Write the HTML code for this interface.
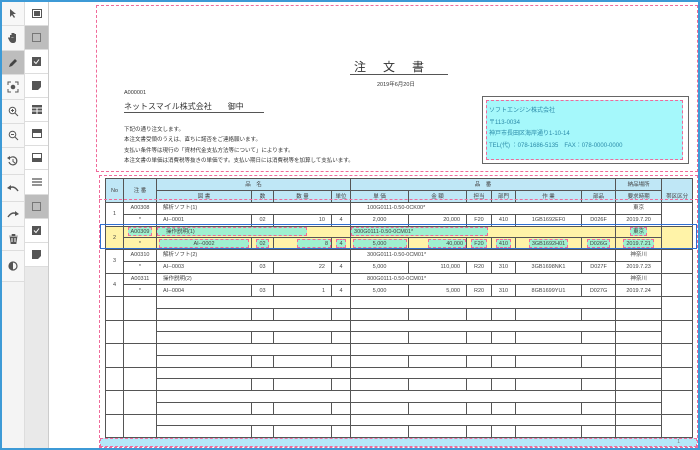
<!DOCTYPE html>
<html><head><meta charset="utf-8"><style>
*{margin:0;padding:0;box-sizing:border-box}
body{width:700px;height:450px;overflow:hidden;background:#fff;font-family:"Liberation Sans","Noto Sans CJK JP",sans-serif;position:relative;color:#333}
.frame{position:absolute;left:0;top:0;width:700px;height:450px;border:2px solid #3d9ad6;z-index:20;pointer-events:none}
.col1{position:absolute;left:2px;top:2px;width:23px;height:446px;background:#f4f4f4;border-right:1px solid #ddd}
.col2{position:absolute;left:25px;top:2px;width:24px;height:446px;background:#e9e9e9;border-right:1px solid #ccc}
.btn{position:absolute;left:0;width:100%;display:flex;align-items:center;justify-content:center;border-bottom:1px solid #ddd;background:#f7f7f7}
.col2 .btn{background:#fff}
.btn.sel{background:#bdbdbd}
.abs{position:absolute}
.pink{position:absolute;border:1px dashed #f06a9a}
.t{font-size:6px;white-space:nowrap}
table{position:absolute;left:105px;top:178px;border-collapse:collapse;table-layout:fixed;width:587px}
td{border:1px solid #555;font-size:5.5px;text-align:center;overflow:hidden;white-space:nowrap;padding:0;height:11.75px;line-height:10px;color:#444}
td.l{text-align:left;padding-left:6px}
td.r{text-align:right;padding-right:6px}
tr.h td{background:#bfe7f6;height:12px}
td.hl{background:#fff3a8}
.cy{display:inline-block;background:#9ff0cf;border:1px dashed #f06a9a;height:9px;line-height:8px;vertical-align:middle;padding:0 2px}
</style></head><body>
<div class="frame"></div>
<div class="col1">
 <div class="btn" style="top:0;height:24px"><svg width="8" height="9"><path d="M1 0L1 8L3 6L5 9L6 8L4 5L7 5Z" fill="#555"/></svg></div>
 <div class="btn" style="top:24px;height:25px"><svg width="11" height="12"><path d="M2 6V3h1.5v3M3.5 5V1h1.5v4M5 5V1h1.5v4M6.5 5V2H8v6c0 2-1 3-3 3S2 10 1 8L0 6l1-1 1 1" fill="#555"/></svg></div>
 <div class="btn sel" style="top:49px;height:24px"><svg width="10" height="10"><path d="M1 9L2 6L7 1L9 3L4 8Z" fill="#444"/></svg></div>
 <div class="btn" style="top:73px;height:25px"><svg width="12" height="12"><circle cx="6" cy="6" r="2.3" fill="#555"/><path d="M1 4V1h3M8 1h3v3M11 8v3H8M4 11H1V8" stroke="#555" fill="none"/></svg></div>
 <div class="btn" style="top:98px;height:24px"><svg width="11" height="11"><circle cx="4.5" cy="4.5" r="3.3" stroke="#555" fill="none"/><path d="M7 7L10 10M3 4.5h3M4.5 3v3" stroke="#555"/></svg></div>
 <div class="btn" style="top:122px;height:24px"><svg width="11" height="11"><circle cx="4.5" cy="4.5" r="3.3" stroke="#555" fill="none"/><path d="M7 7L10 10M3 4.5h3" stroke="#555"/></svg></div>
 <div class="btn" style="top:146px;height:27px"><svg width="12" height="12"><path d="M3 3A4 4 0 1 1 2 7" stroke="#555" fill="none" stroke-width="1.2"/><path d="M0 3L3 1L3 5Z" fill="#555"/><path d="M6 4V6.5L8 8" stroke="#555" fill="none"/></svg></div>
 <div class="btn" style="top:173px;height:27px"><svg width="12" height="9"><path d="M2 4Q7 1 11 7" stroke="#555" fill="none" stroke-width="1.5"/><path d="M0 4L4 1V6Z" fill="#555"/></svg></div>
 <div class="btn" style="top:200px;height:25px"><svg width="12" height="9"><path d="M10 4Q5 1 1 7" stroke="#555" fill="none" stroke-width="1.5"/><path d="M12 4L8 1V6Z" fill="#555"/></svg></div>
 <div class="btn" style="top:225px;height:24px"><svg width="9" height="10"><path d="M0 2h9M3 2V0h3v2M1 3h7l-1 7H2Z" fill="#555" stroke="#555" stroke-width=".6"/><path d="M3 4v4M6 4v4" stroke="#fff"/></svg></div>
 <div class="btn" style="top:249px;height:31px"><svg width="10" height="10"><circle cx="5" cy="5" r="4" stroke="#555" fill="none" stroke-width="1.2"/><path d="M5 1A4 4 0 0 0 5 9Z" fill="#555"/></svg></div>
</div>
<div class="col2">
 <div class="btn" style="top:0;height:24px"><svg width="10" height="9"><rect x="0.5" y="0.5" width="9" height="8" fill="none" stroke="#555"/><rect x="2" y="2" width="6" height="5" fill="#555"/></svg></div>
 <div class="btn sel" style="top:24px;height:24px"><svg width="9" height="9"><rect x="0.5" y="0.5" width="8" height="8" fill="none" stroke="#777"/></svg></div>
 <div class="btn" style="top:48px;height:24px"><svg width="9" height="9"><rect width="9" height="9" fill="#555"/><path d="M2 4.5L4 6.5L7 2.5" stroke="#fff" fill="none"/></svg></div>
 <div class="btn" style="top:72px;height:24px"><svg width="9" height="9"><path d="M0 0h9v6l-3 3H0Z" fill="#555"/></svg></div>
 <div class="btn" style="top:96px;height:24px"><svg width="10" height="9"><rect width="10" height="9" fill="#555"/><path d="M0 3h10M0 6h10M5 3v6" stroke="#fff"/></svg></div>
 <div class="btn" style="top:120px;height:24px"><svg width="10" height="9"><rect x="0.5" y="0.5" width="9" height="8" fill="#fff" stroke="#555"/><rect width="10" height="4" fill="#555"/></svg></div>
 <div class="btn" style="top:144px;height:24px"><svg width="10" height="9"><rect x="0.5" y="0.5" width="9" height="8" fill="#fff" stroke="#555"/><rect y="5" width="10" height="4" fill="#555"/></svg></div>
 <div class="btn" style="top:168px;height:25px"><svg width="10" height="8"><path d="M0 1h10M0 4h10M0 7h10" stroke="#555" stroke-width="1.2"/></svg></div>
 <div class="btn sel" style="top:193px;height:24px"><svg width="9" height="9"><rect x="0.5" y="0.5" width="8" height="8" fill="none" stroke="#777"/></svg></div>
 <div class="btn" style="top:217px;height:24px"><svg width="9" height="9"><rect width="9" height="9" fill="#555"/><path d="M2 4.5L4 6.5L7 2.5" stroke="#fff" fill="none"/></svg></div>
 <div class="btn" style="top:241px;height:24px"><svg width="9" height="9"><path d="M0 0h9v6l-3 3H0Z" fill="#555"/></svg></div>
</div>

<div class="pink" style="left:96px;top:5px;width:602px;height:167px"></div>
<div class="abs" style="left:350px;top:61px;width:98px;font-size:12px;letter-spacing:17px;color:#333;border-bottom:1px solid #555;line-height:13px;padding-left:4px">注文書</div>
<div class="abs t" style="left:377px;top:80px;font-size:5.5px">2019年6月20日</div>
<div class="abs t" style="left:124px;top:90px;font-size:5.5px">A000001</div>
<div class="abs" style="left:124px;top:101px;width:140px;font-size:8px;border-bottom:1px solid #555;line-height:11px;white-space:nowrap">ネットスマイル株式会社　　御中</div>
<div class="abs t" style="left:124px;top:125px;font-size:5.5px;line-height:10.3px">下記の通り注文します。<br>本注文書受領のうえは、直ちに諾否をご連絡願います。<br>支払い条件等は現行の「資材代金支払方法等について」によります。<br>本注文書の単価は消費税等抜きの単価です。支払い期日には消費税等を加算して支払います。</div>
<div class="abs" style="left:482px;top:96px;width:207px;height:68px;border:1px solid #666"></div>
<div class="abs" style="left:486px;top:100px;width:197px;height:60px;background:#a5f8fb;border:1px dashed #f06a9a;font-size:6px;color:#2a8aa8;line-height:11.7px;padding:5px 0 0 2px;white-space:nowrap">ソフトエンジン株式会社<br>〒113-0034<br>神戸市長田区海岸通り1-10-14<br>TEL(代) ：078-1686-5135　FAX：078-0000-0000</div>

<div class="pink" style="left:99px;top:175px;width:599px;height:273px"></div>
<table>
<colgroup><col style="width:18px"><col style="width:33px"><col style="width:95px"><col style="width:22px"><col style="width:58px"><col style="width:19px"><col style="width:58px"><col style="width:58px"><col style="width:25px"><col style="width:24px"><col style="width:66px"><col style="width:34px"><col style="width:46px"><col style="width:31px"></colgroup>
<tr class="h"><td rowspan="2">No</td><td rowspan="2">注 番</td><td colspan="4">品　名</td><td colspan="6">品　番</td><td>納品場所</td><td rowspan="2" style="vertical-align:bottom">帯区区分</td></tr>
<tr class="h"><td>図 書</td><td>数</td><td>数 量</td><td>単位</td><td>単 価</td><td>金 額</td><td>担当</td><td>部門</td><td>作 業</td><td>部品</td><td>要求時期</td></tr>

<tr><td rowspan="2">1</td><td>A00308</td><td colspan="4" class="l">解析ソフト(1)</td><td colspan="6" class="l" style="padding-left:16px">100G0111-0.50-0CK00*</td><td>東京</td><td rowspan="2"></td></tr>
<tr><td>*</td><td class="l">AI--0001</td><td>02</td><td class="r">10</td><td>4</td><td>2,000</td><td class="r">20,000</td><td>F20</td><td>410</td><td>1GB1692EF0</td><td>D026F</td><td>2019.7.20</td></tr>

<tr><td rowspan="2" class="hl">2</td><td class="hl"><span class="cy">A00309</span></td><td colspan="4" class="hl" style="text-align:left"><span class="cy" style="width:150px;text-align:left;padding-left:8px">操作説明(1)</span></td><td colspan="6" class="hl" style="text-align:left"><span class="cy" style="width:137px">300G0111-0.50-0CM01*</span></td><td class="hl"><span class="cy">東京</span></td><td rowspan="2" class="hl"></td></tr>
<tr><td class="hl">*</td><td class="hl"><span class="cy" style="width:90px">AI--0002</span></td><td class="hl"><span class="cy">02</span></td><td class="hl" style="text-align:right"><span class="cy" style="width:34px">8</span></td><td class="hl"><span class="cy">4</span></td><td class="hl"><span class="cy" style="width:54px">5,000</span></td><td class="hl" style="text-align:right"><span class="cy" style="width:38px">40,000</span></td><td class="hl"><span class="cy">F20</span></td><td class="hl"><span class="cy">410</span></td><td class="hl"><span class="cy">3GB1692H01</span></td><td class="hl"><span class="cy">D026G</span></td><td class="hl"><span class="cy">2019.7.21</span></td></tr>

<tr><td rowspan="2">3</td><td>A00310</td><td colspan="4" class="l">解析ソフト(2)</td><td colspan="6" class="l" style="padding-left:16px">300G0111-0.50-0CM01*</td><td>神奈川</td><td rowspan="2"></td></tr>
<tr><td>*</td><td class="l">AI--0003</td><td>03</td><td class="r">22</td><td>4</td><td>5,000</td><td class="r">110,000</td><td>R20</td><td>310</td><td>3GB1698NK1</td><td>D027F</td><td>2019.7.23</td></tr>

<tr><td rowspan="2">4</td><td>A00311</td><td colspan="4" class="l">操作説明(2)</td><td colspan="6" class="l" style="padding-left:16px">800G0111-0.50-0CM01*</td><td>神奈川</td><td rowspan="2"></td></tr>
<tr><td>*</td><td class="l">AI--0004</td><td>03</td><td class="r">1</td><td>4</td><td>5,000</td><td class="r">5,000</td><td>R20</td><td>310</td><td>8GB1699YU1</td><td>D027G</td><td>2019.7.24</td></tr>

<tr><td rowspan="2"></td><td rowspan="2"></td><td colspan="4"></td><td colspan="6"></td><td></td><td rowspan="2"></td></tr>
<tr><td></td><td></td><td></td><td></td><td></td><td></td><td></td><td></td><td></td><td></td><td></td></tr>
<tr><td rowspan="2"></td><td rowspan="2"></td><td colspan="4"></td><td colspan="6"></td><td></td><td rowspan="2"></td></tr>
<tr><td></td><td></td><td></td><td></td><td></td><td></td><td></td><td></td><td></td><td></td><td></td></tr>
<tr><td rowspan="2"></td><td rowspan="2"></td><td colspan="4"></td><td colspan="6"></td><td></td><td rowspan="2"></td></tr>
<tr><td></td><td></td><td></td><td></td><td></td><td></td><td></td><td></td><td></td><td></td><td></td></tr>
<tr><td rowspan="2"></td><td rowspan="2"></td><td colspan="4"></td><td colspan="6"></td><td></td><td rowspan="2"></td></tr>
<tr><td></td><td></td><td></td><td></td><td></td><td></td><td></td><td></td><td></td><td></td><td></td></tr>
<tr><td rowspan="2"></td><td rowspan="2"></td><td colspan="4"></td><td colspan="6"></td><td></td><td rowspan="2"></td></tr>
<tr><td></td><td></td><td></td><td></td><td></td><td></td><td></td><td></td><td></td><td></td><td></td></tr>
<tr><td rowspan="2"></td><td rowspan="2"></td><td colspan="4"></td><td colspan="6"></td><td></td><td rowspan="2"></td></tr>
<tr><td></td><td></td><td></td><td></td><td></td><td></td><td></td><td></td><td></td><td></td><td></td></tr>
</table>
<div class="abs" style="left:100px;top:224px;width:597px;height:25px;border:1.5px solid #2f6fd0"></div>
<div class="abs" style="left:100px;top:438px;width:597px;height:9px;background:#b5e8f8;border:1px dashed #f06a9a;font-size:5px;text-align:right;padding-right:16px;line-height:7px;color:#777">1</div>
<div class="pink" style="left:99px;top:199px;width:599px;height:2px;border-width:1px 0 0 0"></div>
</body></html>
